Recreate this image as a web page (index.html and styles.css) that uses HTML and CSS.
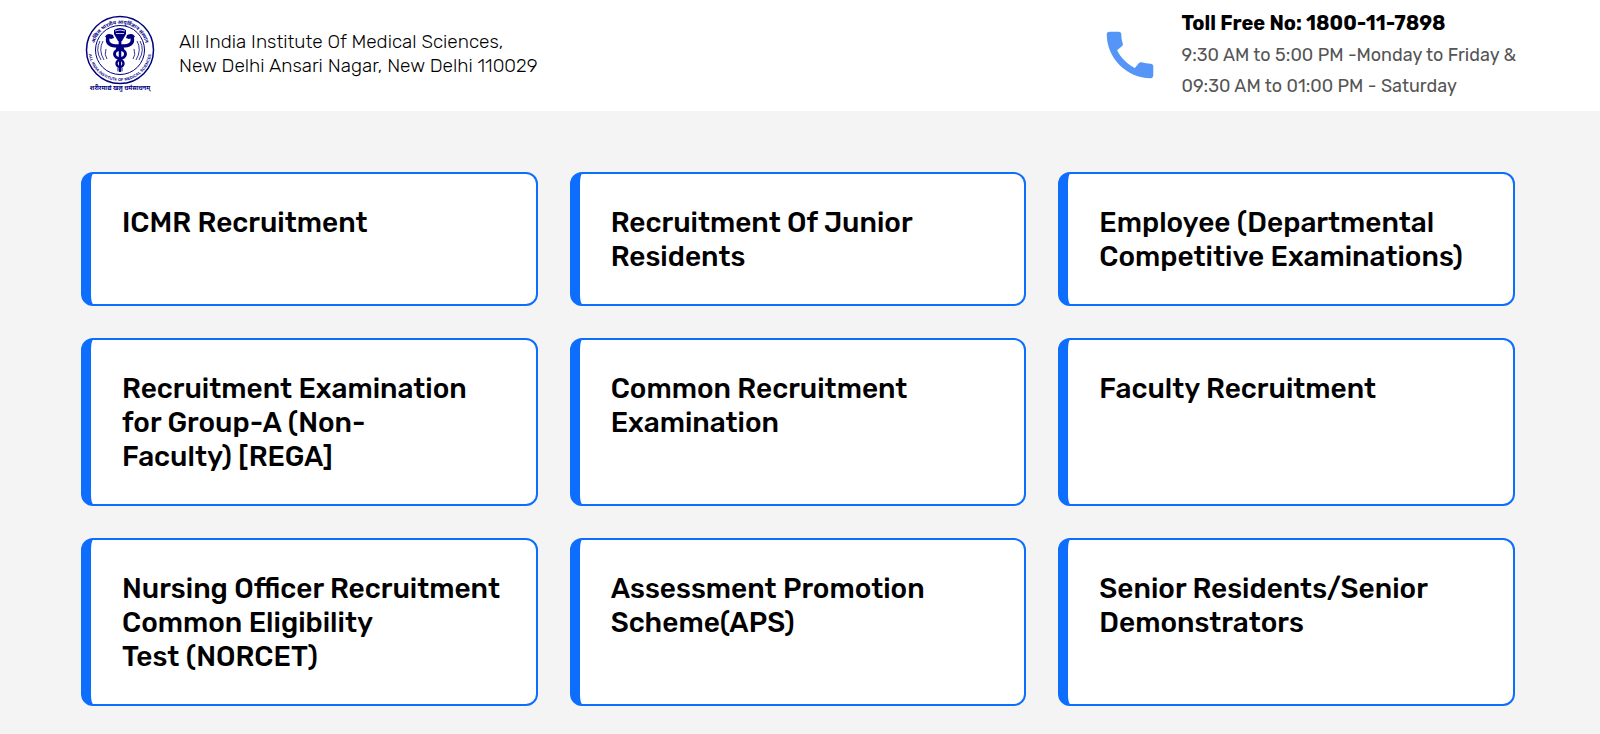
FILE: index.html
```html
<!DOCTYPE html>
<html lang="en">
<head>
  <meta charset="UTF-8">
  <meta name="viewport" content="width=device-width, initial-scale=1.0">
  <title>AIIMS Examinations</title>
  <link rel="stylesheet" href="styles.css">
</head>
<body>

  <header class="header">
    <div class="brand">
      <svg class="logo" viewBox="0 0 76 80" role="img" aria-label="AIIMS">
        <defs>
          <path id="arcTop" d="M 13.3 47 A 26.5 26.5 0 1 1 62.7 47"/>
          <path id="arcBottom" d="M 8 27 A 31.5 31.5 0 1 0 68 27"/>
        </defs>
        <!-- rings -->
        <g fill="none" stroke="#000080">
          <circle cx="38" cy="37" r="33.5" stroke-width="1.5"/>
          <circle cx="38" cy="37" r="24.5" stroke-width="1"/>
        </g>
        <text class="logo-hindi"><textPath href="#arcTop" startOffset="50%">अखिल भारतीय आयुर्विज्ञान संस्थान</textPath></text>
        <text class="logo-english"><textPath href="#arcBottom" startOffset="50%">ALL INDIA INSTITUTE OF MEDICAL SCIENCES</textPath></text>
        <!-- side rays -->
        <g fill="none" stroke="#000080" stroke-width="0.8">
          <path d="M21 28q-5 9 1 19M18 28q-5 9 1 19M24 36q-2 6 1 10"/>
          <path d="M55 28q5 9-1 19M58 28q5 9-1 19M52 36q2 6-1 10"/>
        </g>
        <!-- staff and snakes -->
        <g fill="#000080">
          <path d="M32 17q6-4 12 0v4l-4 7h-4l-4-7z"/>
          <path d="M36.5 23h3l-.5 36h-2z"/>
          <path d="M23 24q2-5 8-2l1 3-3 1z"/>
          <path d="M53 24q-2-5-8-2l-1 3 3 1z"/>
        </g>
        <g fill="none" stroke="#000080" stroke-linecap="round">
          <path stroke-width="3.6" d="M26 24c-2 7 3 9 10 9 4 0 5 1 4 3M50 24c2 7-3 9-10 9-4 0-5 1-4 3"/>
          <ellipse stroke-width="3" cx="38" cy="41" rx="5.5" ry="4.5"/>
          <ellipse stroke-width="2.4" cx="38" cy="50.5" rx="3.5" ry="3.5"/>
          <path stroke-width="1" d="M36 55v3M40 55v3"/>
        </g>
        <path d="M33 18q5-2 10 0M34 20.5h8" fill="none" stroke="#fff" stroke-width="0.8"/>
        <text class="logo-motto" x="38" y="77">शरीरमाद्यं खलु धर्मसाधनम्</text>
      </svg>
      <p class="address">All India Institute Of Medical Sciences,<br>New Delhi Ansari Nagar, New Delhi 110029</p>
    </div>

    <div class="contact">
      <svg class="phone-icon" viewBox="0 0 24 24" aria-hidden="true">
        <path d="M20.01 15.38c-1.23 0-2.42-.2-3.53-.56-.35-.12-.74-.03-1.01.24l-1.57 1.97c-2.83-1.35-5.48-3.9-6.89-6.83l1.95-1.66c.27-.28.35-.67.24-1.02-.37-1.11-.56-2.3-.56-3.53 0-.54-.45-.99-.99-.99H4.19C3.65 3 3 3.24 3 3.99 3 13.28 10.73 21 20.01 21c.71 0 .99-.63.99-1.18v-3.45c0-.54-.45-.99-.99-.99z"/>
      </svg>
      <div class="contact-text">
        <strong class="toll-free">Toll Free No: 1800-11-7898</strong>
        <p class="hours">9:30 AM to 5:00 PM -Monday to Friday &amp;<br>09:30 AM to 01:00 PM - Saturday</p>
      </div>
    </div>
  </header>

  <main class="cards">
    <a class="card" href="#">ICMR Recruitment</a>
    <a class="card" href="#">Recruitment Of Junior Residents</a>
    <a class="card" href="#">Employee (Departmental Competitive Examinations)</a>
    <a class="card" href="#">Recruitment Examination for Group-A (Non-Faculty)&nbsp;[REGA]</a>
    <a class="card" href="#">Common Recruitment Examination</a>
    <a class="card" href="#">Faculty Recruitment</a>
    <a class="card" href="#">Nursing Officer Recruitment Common Eligibility Test&nbsp;(NORCET)</a>
    <a class="card" href="#">Assessment Promotion Scheme(APS)</a>
    <a class="card" href="#">Senior Residents/Senior Demonstrators</a>
  </main>

</body>
</html>
```

FILE: styles.css
```css
* {
  box-sizing: border-box;
}

body {
  margin: 0;
  background-color: #f4f4f4;
  color: #000;
  font-family: Rubik, Inter, "Liberation Sans", sans-serif;
}

p {
  margin: 0;
}

.header {
  display: flex;
  justify-content: space-between;
  align-items: center;
  padding: 7px 84px 9px 82px;
  background-color: #fff;
}

.brand {
  display: flex;
  align-items: center;
  gap: 21px;
  padding-bottom: 3px;
}

.logo {
  width: 76px;
  height: 80px;
}

.logo text {
  fill: #000080;
  font-family: "Noto Sans Devanagari", "Noto Sans", sans-serif;
  font-weight: 700;
  text-anchor: middle;
}

.logo .logo-hindi {
  font-size: 5px;
}

.logo .logo-english {
  font-family: "Liberation Sans", sans-serif;
  font-size: 4px;
}

.logo .logo-motto {
  font-size: 6px;
}

.address {
  padding-top: 2px;
  font-size: 19px;
  font-weight: 300;
  line-height: 24px;
}

.contact {
  display: flex;
  align-items: center;
  gap: 20px;
}

.phone-icon {
  width: 62px;
  height: 62px;
  fill: #5595f7;
}

.toll-free {
  display: block;
  font-size: 20px;
  font-weight: 700;
  line-height: 33px;
}

.hours {
  color: #555;
  font-size: 18px;
  line-height: 31px;
}

.cards {
  display: grid;
  grid-template-columns: repeat(3, 1fr);
  gap: 32px;
  padding: 61px 85px 28px 81px;
}

.card {
  padding: 32px 30px 30px 31px;
  background-color: #fff;
  border: 2px solid #0d6efd;
  border-left-width: 10px;
  border-radius: 12px;
  color: #000;
  font-size: 28px;
  font-weight: 500;
  line-height: 34px;
  text-decoration: none;
}
```
